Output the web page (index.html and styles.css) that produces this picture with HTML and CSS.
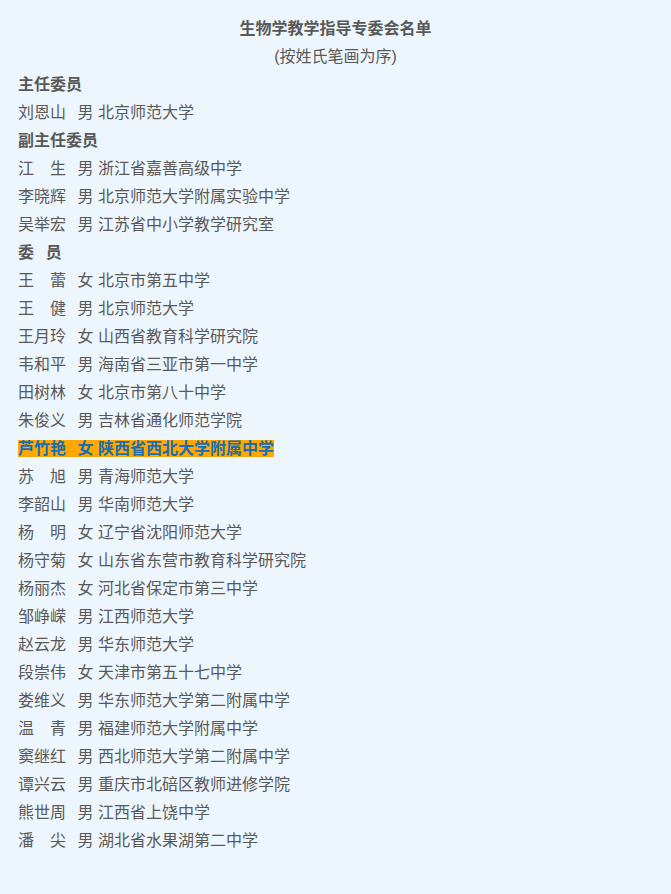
FILE: index.html
```html
<!DOCTYPE html>
<html lang="zh-CN">
<head>
<meta charset="utf-8">
<title>生物学教学指导专委会名单</title>
<link rel="stylesheet" href="styles.css">
</head>
<body>
<div class="page">
  <p class="title">生物学教学指导专委会名单</p>
  <p class="sub">(按姓氏笔画为序)</p>
  <p class="head">主任委员</p>
  <p class="row"><span class="n">刘恩山</span><span class="g">男</span>北京师范大学</p>
  <p class="head">副主任委员</p>
  <p class="row"><span class="n">江　生</span><span class="g">男</span>浙江省嘉善高级中学</p>
  <p class="row"><span class="n">李晓辉</span><span class="g">男</span>北京师范大学附属实验中学</p>
  <p class="row"><span class="n">吴举宏</span><span class="g">男</span>江苏省中小学教学研究室</p>
  <p class="head"><span class="w">委</span>员</p>
  <p class="row"><span class="n">王　蕾</span><span class="g">女</span>北京市第五中学</p>
  <p class="row"><span class="n">王　健</span><span class="g">男</span>北京师范大学</p>
  <p class="row"><span class="n">王月玲</span><span class="g">女</span>山西省教育科学研究院</p>
  <p class="row"><span class="n">韦和平</span><span class="g">男</span>海南省三亚市第一中学</p>
  <p class="row"><span class="n">田树林</span><span class="g">女</span>北京市第八十中学</p>
  <p class="row"><span class="n">朱俊义</span><span class="g">男</span>吉林省通化师范学院</p>
  <p class="row"><span class="hl"><span class="n">芦竹艳</span><span class="g">女</span>陕西省西北大学附属中学</span></p>
  <p class="row"><span class="n">苏　旭</span><span class="g">男</span>青海师范大学</p>
  <p class="row"><span class="n">李韶山</span><span class="g">男</span>华南师范大学</p>
  <p class="row"><span class="n">杨　明</span><span class="g">女</span>辽宁省沈阳师范大学</p>
  <p class="row"><span class="n">杨守菊</span><span class="g">女</span>山东省东营市教育科学研究院</p>
  <p class="row"><span class="n">杨丽杰</span><span class="g">女</span>河北省保定市第三中学</p>
  <p class="row"><span class="n">邹峥嵘</span><span class="g">男</span>江西师范大学</p>
  <p class="row"><span class="n">赵云龙</span><span class="g">男</span>华东师范大学</p>
  <p class="row"><span class="n">段崇伟</span><span class="g">女</span>天津市第五十七中学</p>
  <p class="row"><span class="n">娄维义</span><span class="g">男</span>华东师范大学第二附属中学</p>
  <p class="row"><span class="n">温　青</span><span class="g">男</span>福建师范大学附属中学</p>
  <p class="row"><span class="n">窦继红</span><span class="g">男</span>西北师范大学第二附属中学</p>
  <p class="row"><span class="n">谭兴云</span><span class="g">男</span>重庆市北碚区教师进修学院</p>
  <p class="row"><span class="n">熊世周</span><span class="g">男</span>江西省上饶中学</p>
  <p class="row"><span class="n">潘　尖</span><span class="g">男</span>湖北省水果湖第二中学</p>
</div>
</body>
</html>
```

FILE: styles.css
```css
html, body {
  margin: 0;
  padding: 0;
  background: #eef6fd;
}
body {
  font-family: "Liberation Sans", "Noto Sans CJK SC", sans-serif;
  font-size: 16px;
  line-height: 28px;
  color: #595959;
  min-height: 894px;
}
.page {
  padding: 15px 18px 0 18px;
}
p {
  margin: 0;
  white-space: nowrap;
}
.title {
  text-align: center;
  font-weight: bold;
}
.sub {
  text-align: center;
}
.head {
  font-weight: bold;
}
.w {
  display: inline-block;
  width: 27.7px;
}
.n {
  display: inline-block;
  width: 59.4px;
}
.g {
  display: inline-block;
  width: 20.6px;
}
.hl {
  background: #ffa900;
  color: #1a6db5;
  font-weight: bold;
}
```
